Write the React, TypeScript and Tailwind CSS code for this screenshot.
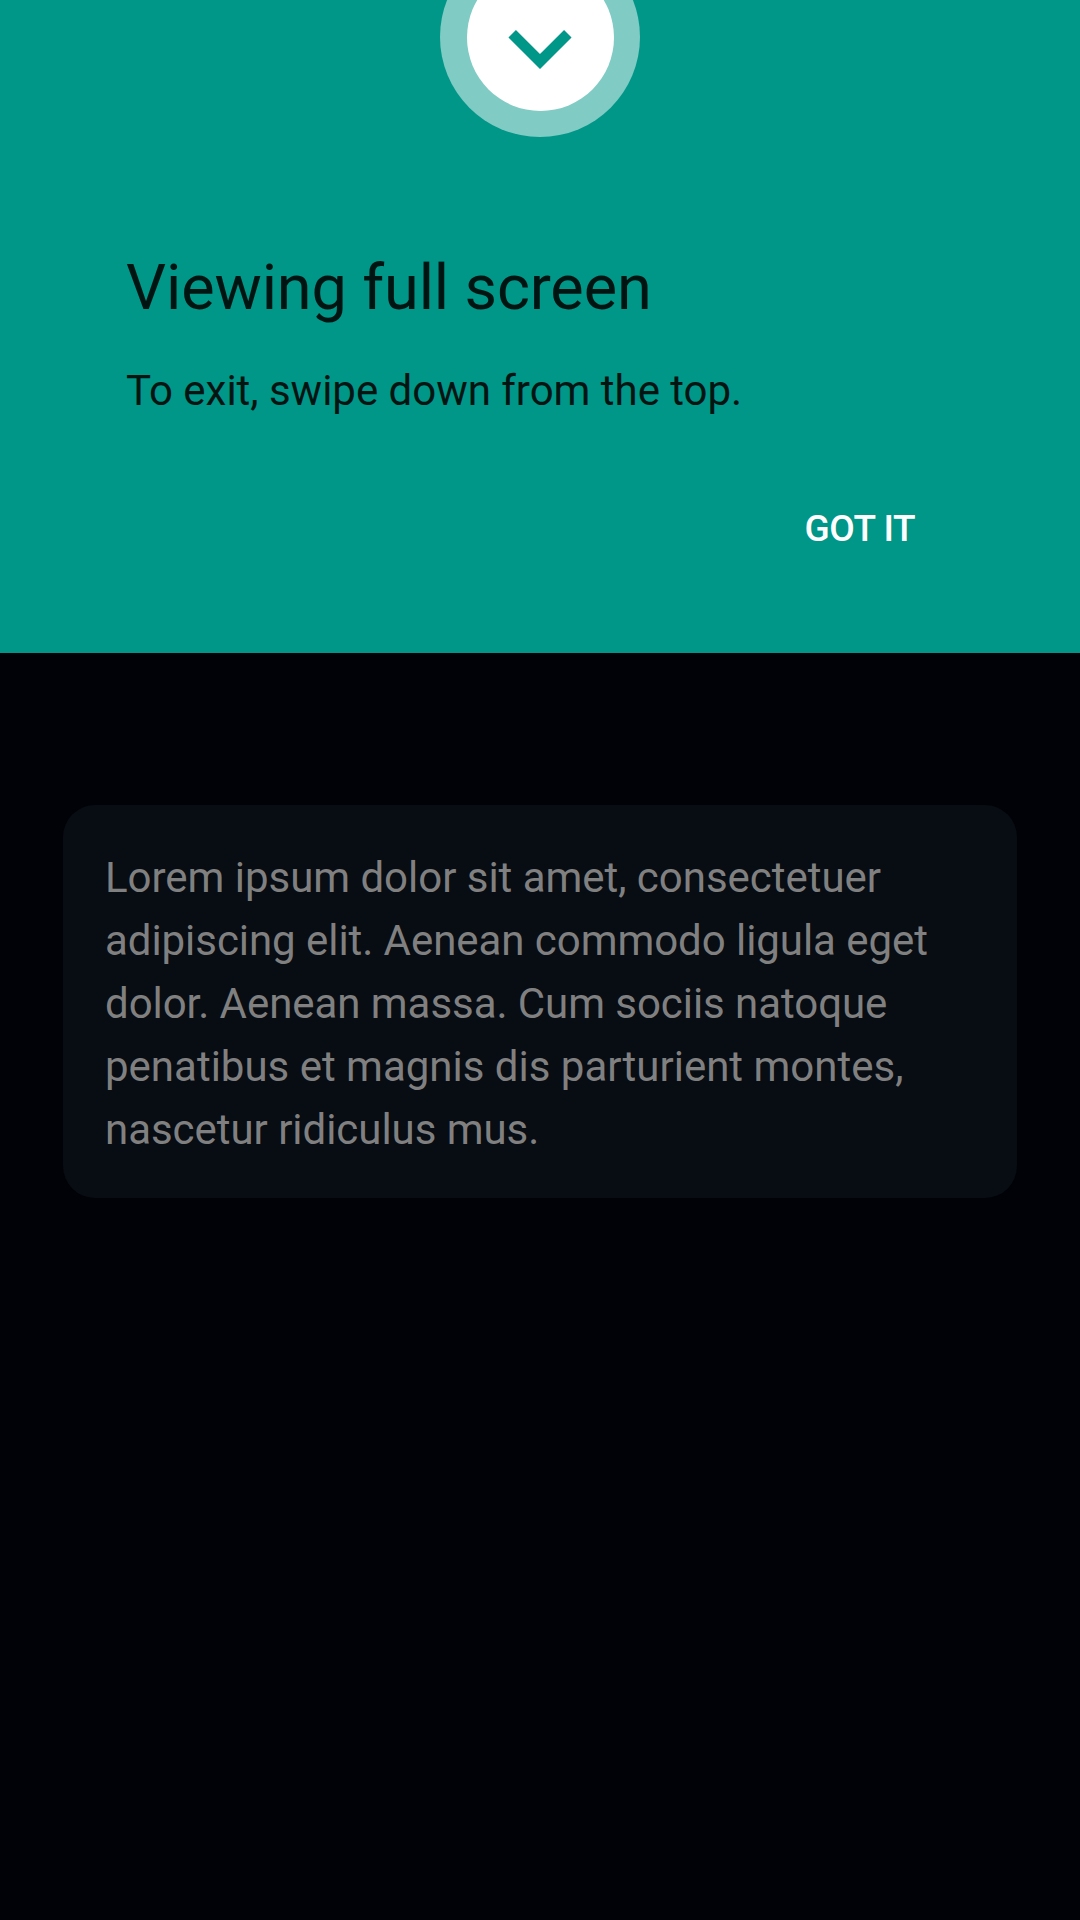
export default function App() {
  return (
    <div className="flex h-[1920px] w-[1080px] flex-col overflow-hidden bg-[#000207] font-['Roboto',sans-serif]">
      <section className="relative h-[653px] bg-[#009688] px-[126px] pt-[250px]">
        <svg className="absolute left-[440px] top-0" width="200" height="138" viewBox="0 0 200 138" aria-hidden="true">
          <circle cx="100" cy="37" r="100" fill="#80cbc4" />
          <circle cx="100.5" cy="37.5" r="73.5" fill="#fff" />
          <path d="M72.2 33.7 L100 61.5 L127.8 33.7" fill="none" stroke="#009688" strokeWidth="10.6" />
        </svg>
        <h1 className="h-[76px] whitespace-nowrap text-[63px] leading-[76px] tracking-[-0.13px] text-[#001412]">Viewing full screen</h1>
        <p className="mt-[40px] h-[50px] whitespace-nowrap text-[42px] leading-[50px] tracking-[-0.02px] text-[#001412]">To exit, swipe down from the top.</p>
        <div className="mt-[89px] flex justify-end pr-[39px]">
          <button className="whitespace-nowrap text-[37px] font-medium leading-[48px] tracking-[-0.45px] text-white">GOT IT</button>
        </div>
      </section>
      <main className="px-[63px] pt-[152px]">
        <p className="h-[393px] rounded-[32px] bg-[#080c13] px-[42px] pt-[41px] text-[42px] leading-[63px] text-[#808080]">
          <span className="block tracking-[-0.03px]">Lorem ipsum dolor sit amet, consectetuer</span>
          <span className="block tracking-[-0.055px]">adipiscing elit. Aenean commodo ligula eget</span>
          <span className="block tracking-[-0.055px]">dolor. Aenean massa. Cum sociis natoque</span>
          <span className="block">penatibus et magnis dis parturient montes,</span>
          <span className="block tracking-[-0.04px]">nascetur ridiculus mus.</span>
        </p>
      </main>
    </div>
  );
}
